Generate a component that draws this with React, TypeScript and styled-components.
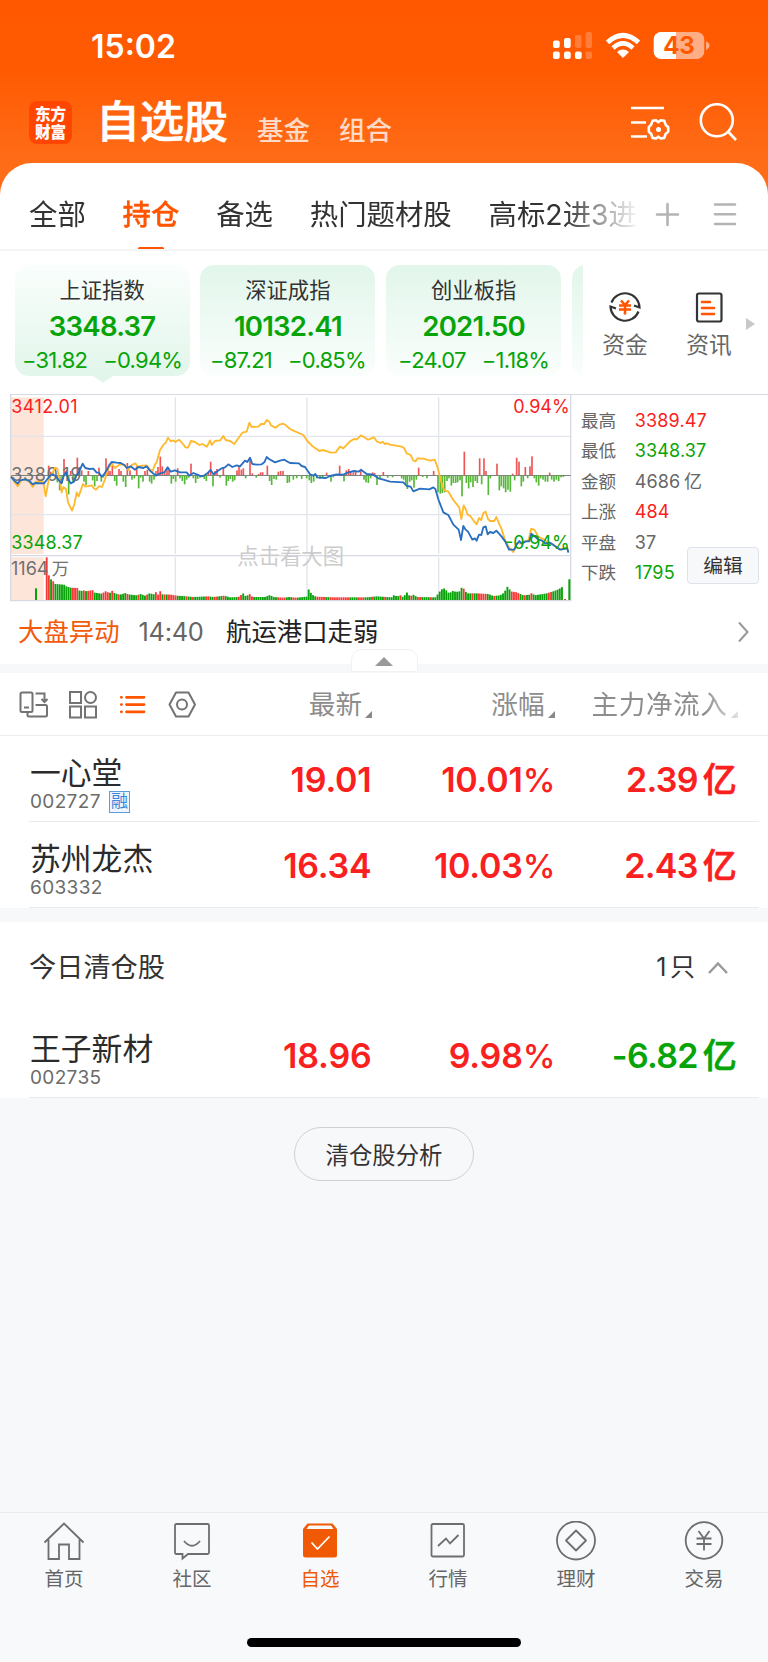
import React from "react";
import styled, { createGlobalStyle, css } from "styled-components";

const RED = "#fa2020";
const GREEN = "#07a407";
const ORANGE = "#ff5500";

const GlobalStyle = createGlobalStyle`
  * { box-sizing: border-box; }
  body {
    margin: 0;
    background: #f7f8fa;
    font-family: Inter, "Noto Sans CJK SC", sans-serif;
    color: #333;
  }
`;

const Screen = styled.div`
  width: 768px;
  height: 1662px;
  display: flex;
  flex-direction: column;
  overflow: hidden;
  background: #f7f8fa;
`;

/* ---------- header ---------- */
const Header = styled.header`
  height: 200px;
  margin-bottom: -37px;
  flex: none;
  background: linear-gradient(#ff5800 0, #ff5a02 70px, #ff6c18 160px, #ff6c18);
`;
const StatusBar = styled.div`
  height: 90px;
  display: flex;
  align-items: flex-start;
  padding: 32px 57px 0 91px;
`;
const Clock = styled.div`
  font-size: 32px;
  line-height: 30px;
  font-weight: 600;
  color: #fff;
  margin-right: auto;
`;
const StatusIcons = styled.svg`
  width: 160px;
  height: 28px;
  display: block;
`;
const TitleBar = styled.div`
  display: flex;
  height: 64px;
  align-items: flex-start;
  padding: 0 29px 0 29px;
`;
const Logo = styled.div`
  margin-top: 11px;
  width: 43px;
  height: 43px;
  border-radius: 8px;
  background: #ff4600;
  color: #fff;
  font: 900 15.6px/17.6px "Noto Sans CJK SC", sans-serif;
  text-align: center;
  padding-top: 4px;
`;
const Title = styled.h1`
  margin: 0 0 0 24px;
  font-size: 44px;
  line-height: 64px;
  font-weight: 500;
  -webkit-text-stroke: 0.6px #fff;
  color: #fff;
`;
const SubTitle = styled.span<{ $gap: number }>`
  margin: 8px 0 0 ${(p) => p.$gap}px;
  font-size: 26.5px;
  line-height: 64px;
  font-weight: 500;
  color: #ffdac6;
`;
const HeaderIcons = styled.svg`
  margin: 11px 0 0 auto;
  width: 110px;
  height: 42px;
`;

/* ---------- group tabs ---------- */
const Panel = styled.section`
  background: #fff;
  flex: none;
`;
const Tabs = styled.nav`
  height: 88px;
  border-radius: 32px 32px 0 0;
  background: #fff;
  border-bottom: 2px solid #f4f5f7;
  display: flex;
  padding-left: 29px;
  flex: none;
`;
const TabScroller = styled.div`
  display: flex;
  width: 609px;
  gap: 36.8px;
  overflow: hidden;
  white-space: nowrap;
  mask-image: linear-gradient(90deg, #000 535px, rgba(0, 0, 0, 0.45) 575px, rgba(0, 0, 0, 0) 612px);
`;
const Tab = styled.div<{ $active?: boolean }>`
  font-size: 28.4px;
  line-height: 103px;
  height: 88px;
  flex: none;
  display: flex;
  flex-direction: column;
  align-items: center;
  ${(p) =>
    p.$active &&
    css`
      color: ${ORANGE};
      font-weight: 500;
      -webkit-text-stroke: 0.3px ${ORANGE};
      &::after {
        content: "";
        width: 26px;
        height: 3px;
        border-radius: 2px;
        background: ${ORANGE};
        margin-top: -19px;
      }
    `}
`;
const TabTools = styled.svg`
  width: 110px;
  height: 40px;
  margin: 31px 0 0 8px;
`;

/* ---------- index cards ---------- */
const IndexRow = styled.div`
  height: 143px;
  display: flex;
  padding: 14px 0 0 14.5px;
`;
const CardScroller = styled.div`
  display: flex;
  gap: 10.6px;
  width: 568.5px;
  overflow: hidden;
`;
const Card = styled.div<{ $selected?: boolean }>`
  flex: none;
  width: 175.2px;
  height: 111px;
  border-radius: 14px;
  position: relative;
  text-align: center;
  background: ${(p) =>
    p.$selected ? "linear-gradient(#fafefc, #e2f6eb)" : "linear-gradient(#e2f6eb, #fafefc)"};
  ${(p) =>
    p.$selected &&
    css`
      &::after {
        content: "";
        position: absolute;
        left: 78px;
        bottom: -7px;
        border: solid transparent;
        border-width: 7px 10px 0;
        border-top-color: #e2f6eb;
      }
    `}
`;
const CardName = styled.div`
  font-size: 21.3px;
  line-height: 51px;
  height: 47px;
`;
const CardValue = styled.div`
  font-size: 27.6px;
  line-height: 28px;
  font-weight: 600;
  letter-spacing: -0.8px;
  color: ${GREEN};
`;
const CardDiff = styled.div`
  display: flex;
  justify-content: center;
  gap: 16px;
  font-size: 22px;
  line-height: 28px;
  margin-top: 6px;
  letter-spacing: -0.75px;
  color: ${GREEN};
`;
const Shortcut = styled.div<{ $left: number }>`
  margin-left: ${(p) => p.$left}px;
  width: 46px;
  display: flex;
  flex-direction: column;
  align-items: center;
  padding-top: 24px;
  font-size: 22.7px;
  line-height: 30px;
  white-space: nowrap;
  color: #666;
  svg {
    width: 36px;
    height: 36px;
    display: block;
    margin-bottom: 5px;
  }
`;
const MoreArrow = styled.div`
  margin: 53px 0 0 14px;
  width: 0;
  height: 0;
  border: solid transparent;
  border-width: 6px 0 6px 9px;
  border-left-color: #c8c8c8;
`;

/* ---------- chart ---------- */
const ChartRow = styled.div`
  display: flex;
  height: 210px;
  margin-left: 10px;
  border-top: 1.3px solid #d8dae3;
`;
const ChartSvg = styled.svg`
  width: 562px;
  height: 207px;
  flex: none;
  display: block;
`;
const Stats = styled.div`
  padding: 11px 0 0 9px;
  width: 115px;
  flex: none;
`;
const StatLine = styled.div`
  display: flex;
  height: 30.4px;
  line-height: 30.4px;
  font-size: 17.6px;
  color: #666;
  white-space: nowrap;
`;
const StatValue = styled.span<{ $tone?: string }>`
  margin-left: 18.5px;
  font-size: 18px;
  letter-spacing: 0.15px;
  color: ${(p) => p.$tone ?? "#666"};
`;
const Suffix = styled.span`
  margin-left: 3.5px;
`;
const EditButton = styled.button`
  margin: 152px 0 0 0;
  width: 72px;
  height: 36.5px;
  flex: none;
  border: 1.3px solid #dfe2ea;
  border-radius: 4px;
  background: #f7f8fa;
  color: #333;
  font: 19.8px/32px "Noto Sans CJK SC", sans-serif;
  padding: 0;
`;

/* ---------- news ---------- */
const NewsRow = styled.div`
  height: 60px;
  display: flex;
  padding: 0 19px 0 18px;
  font-size: 25.4px;
  line-height: 56px;
  color: #222;
`;
const NewsTag = styled.span`
  color: #f25a0c;
`;
const NewsTime = styled.span`
  margin: 0 22.5px 0 19px;
  color: #666;
  letter-spacing: -0.3px;
`;
const NewsArrow = styled.svg`
  width: 12px;
  height: 22px;
  margin: 17px 0 0 auto;
`;
const Band = styled.div<{ $h: number }>`
  height: ${(p) => p.$h}px;
  flex: none;
  background: #f7f8fa;
  display: flex;
  justify-content: center;
  align-items: flex-end;
`;
const Handle = styled.div`
  flex: none;
  width: 67px;
  height: 23px;
  margin-bottom: 1px;
  border: 1.3px solid #f1f2f5;
  border-radius: 11px 11px 0 0;
  background: #fff;
  display: flex;
  justify-content: center;
  padding-top: 7px;
  &::after {
    content: "";
    width: 0;
    height: 0;
    border: solid transparent;
    border-width: 0 9px 9px;
    border-bottom-color: #999;
  }
`;

/* ---------- stock table ---------- */
const TableHead = styled.div`
  height: 63px;
  display: flex;
  border-bottom: 1.3px solid #ecedf0;
  color: #8d8d8d;
  font-size: 26.6px;
  line-height: 63px;
`;
const ViewIcons = styled.svg`
  width: 190px;
  height: 40px;
  margin: 12px 0 0 14px;
  flex: none;
`;
const Column = styled.div<{ $w: number; $faded?: boolean }>`
  width: ${(p) => p.$w}px;
  display: flex;
  justify-content: flex-end;
  align-items: flex-start;
  white-space: nowrap;
  ${(p) =>
    p.$faded &&
    css`
      letter-spacing: 0.6px;
      mask-image: linear-gradient(90deg, #000 150px, rgba(0, 0, 0, 0.2) 185px);
    `}
  &::after {
    content: "";
    margin: 38px 0 0 3px;
    width: 0;
    height: 0;
    border-left: 7px solid transparent;
    border-bottom: 7px solid #888;
  }
`;
const StockRow = styled.div`
  height: 86px;
  margin: 0 9px 0 29px;
  border-bottom: 1.3px solid #e9ebef;
  display: flex;
  flex: none;
`;
const StockInfo = styled.div`
  width: 160px;
  padding: 15px 0 0 1px;
`;
const StockName = styled.div`
  font-size: 30.8px;
  line-height: 44px;
  height: 39px;
  color: #2b2b2b;
`;
const StockCode = styled.div`
  display: flex;
  align-items: center;
  font-size: 19px;
  line-height: 24px;
  letter-spacing: 0.35px;
  color: #6b6b6b;
`;
const MarginTag = styled.span`
  margin-left: 8px;
  width: 21.5px;
  height: 21.5px;
  border: 1.3px solid #5b9be0;
  color: #3a86d8;
  font-size: 17px;
  line-height: 18px;
  text-align: center;
  letter-spacing: 0;
  background: #eef5fd;
`;
const Figure = styled.div<{ $w: number; $tone: string }>`
  width: ${(p) => p.$w}px;
  color: ${(p) => p.$tone};
  font-size: 34px;
  line-height: 87px;
  font-weight: 600;
  letter-spacing: -0.2px;
  text-align: right;
  white-space: nowrap;
`;
const Percent = styled.span`
  font-size: 33px;
  font-weight: 500;
  letter-spacing: -1px;
`;
const FlowNumber = styled.span`
  letter-spacing: -0.7px;
`;
const Unit = styled.span`
  font-size: 34px;
  font-weight: 500;
  margin-left: 5px;
  -webkit-text-stroke: 0.7px currentColor;
`;
const SectionHead = styled.div`
  height: 90px;
  display: flex;
  padding: 0 40px 0 29px;
  font-size: 27.2px;
  line-height: 91px;
`;
const SectionCount = styled.span`
  margin: 0 13px 0 auto;
  font-size: 25px;
`;
const SectionArrow = styled.svg`
  width: 20px;
  height: 14px;
  margin-top: 39px;
`;
const AnalyseButton = styled.button`
  align-self: center;
  flex: none;
  margin-top: 28.5px;
  width: 179.5px;
  height: 54px;
  border: 1.3px solid #d0d1d4;
  border-radius: 27px;
  background: #f7f8fa;
  font: 23.4px/48px "Noto Sans CJK SC", sans-serif;
  color: #333;
  padding: 0;
`;

/* ---------- bottom bar ---------- */
const BottomBar = styled.footer`
  margin-top: auto;
  height: 150px;
  flex: none;
  border-top: 1.5px solid #e9ebee;
  background: #f8f9fb;
  display: flex;
  flex-direction: column;
  align-items: center;
`;
const BottomNav = styled.nav`
  display: flex;
  height: 125px;
`;
const NavItem = styled.div<{ $active?: boolean }>`
  width: 128px;
  display: flex;
  flex-direction: column;
  align-items: center;
  padding-top: 8px;
  font-size: 19.5px;
  line-height: 28px;
  color: ${(p) => (p.$active ? "#f05a05" : "#666")};
  svg {
    width: 44px;
    height: 42px;
    display: block;
    margin-bottom: 1.5px;
  }
`;
const HomeIndicator = styled.div`
  width: 274px;
  height: 9px;
  border-radius: 5px;
  background: #000;
`;

/* ---------- chart data (chart units: a third of a pixel) ---------- */
type P = [number, number];

const average: P[] = [
  [33,272],[43,290],[53,304],[65,285],[80,284],[92,296],[98,306],[108,290],[130,291],[137,334],[146,285],[158,262],[165,248],[172,251],[180,290],[185,322],[190,306],[198,312],[204,352],[216,377],[223,358],[230,322],[236,334],[249,297],[256,305],[275,301],[281,309],[288,314],[298,303],[306,306],[315,283],[325,250],[335,236],[345,249],[360,238],[375,240],[385,254],[395,240],[406,235],[413,245],[425,242],[440,241],[450,254],[458,258],[465,238],[470,232],[480,195],[492,177],[497,174],[504,158],[512,169],[520,166],[526,171],[537,164],[550,178],[556,187],[564,188],[573,168],[585,171],[598,180],[607,177],[621,185],[630,166],[635,180],[645,168],[661,166],[670,153],[677,165],[690,168],[703,177],[715,160],[727,143],[740,140],[748,113],[755,126],[775,125],[783,117],[793,117],[800,105],[808,110],[813,121],[826,128],[840,118],[850,116],[858,121],[870,132],[880,137],[910,150],[922,168],[938,184],[958,198],[968,195],[982,199],[992,203],[1007,202],[1020,185],[1030,190],[1050,169],[1062,162],[1071,163],[1082,151],[1092,156],[1104,164],[1122,157],[1130,169],[1142,174],[1148,170],[1154,177],[1162,175],[1170,179],[1205,185],[1212,189],[1220,205],[1232,210],[1240,227],[1247,229],[1253,220],[1270,221],[1290,227],[1304,224],[1312,245],[1325,295],[1332,315],[1345,320],[1360,345],[1378,368],[1384,402],[1391,361],[1398,375],[1402,388],[1411,393],[1423,410],[1430,418],[1437,399],[1444,405],[1450,384],[1457,380],[1464,402],[1470,408],[1483,408],[1489,396],[1498,418],[1504,430],[1515,465],[1525,485],[1540,501],[1550,475],[1560,475],[1586,465],[1593,432],[1603,434],[1615,455],[1635,465],[1645,478],[1655,475],[1670,488],[1685,494],[1700,485],[1705,500],
];
const price: P[] = [
  [33,275],[42,286],[53,296],[60,286],[75,283],[88,288],[98,298],[105,294],[132,295],[140,285],[148,275],[155,268],[165,272],[175,284],[185,295],[192,270],[198,262],[204,280],[212,295],[222,290],[230,270],[238,258],[248,236],[256,249],[268,252],[280,251],[290,263],[297,263],[305,275],[312,268],[320,256],[328,240],[335,231],[350,233],[362,234],[373,240],[380,249],[392,244],[405,254],[415,246],[430,249],[440,244],[450,257],[458,264],[468,272],[480,265],[493,262],[503,247],[512,260],[525,256],[540,262],[560,262],[568,272],[580,264],[590,268],[605,274],[613,271],[622,265],[632,255],[640,268],[650,260],[665,250],[675,247],[685,238],[697,246],[710,241],[720,244],[735,227],[742,231],[750,218],[757,237],[770,239],[785,238],[793,232],[800,216],[807,222],[825,232],[840,227],[853,224],[863,230],[870,234],[897,235],[905,243],[915,246],[930,268],[940,272],[946,267],[952,277],[978,279],[990,273],[1010,268],[1030,269],[1045,262],[1062,258],[1075,260],[1083,254],[1100,267],[1120,269],[1135,280],[1150,284],[1170,290],[1210,292],[1220,303],[1232,305],[1240,319],[1260,311],[1288,313],[1300,307],[1306,312],[1315,343],[1330,382],[1345,390],[1360,419],[1376,434],[1383,465],[1390,423],[1396,433],[1404,440],[1417,464],[1425,460],[1430,467],[1437,449],[1444,450],[1450,427],[1457,424],[1463,448],[1470,441],[1480,444],[1489,437],[1505,455],[1516,470],[1527,494],[1543,494],[1550,478],[1558,468],[1565,476],[1577,469],[1588,469],[1594,446],[1605,455],[1615,464],[1625,466],[1635,475],[1650,473],[1665,483],[1680,494],[1702,490],[1705,503],
];
const momentum: P[] = [
  [146,28],[152,10],[159,8],[172,-20],[179,-44],[186,-22],[192,48],[199,14],[206,-56],[212,12],[219,-20],[225,-10],[232,52],[238,24],[245,14],[252,-18],[258,-28],[265,12],[278,-14],[284,-32],[291,-16],[297,22],[304,-18],[310,-6],[318,50],[324,18],[330,12],[337,28],[344,-16],[350,-30],[357,18],[363,12],[370,-18],[377,-34],[382,36],[390,14],[396,-12],[403,-8],[410,26],[416,-38],[422,-6],[429,-18],[435,12],[442,16],[449,-18],[455,-24],[462,-12],[468,12],[474,24],[481,55],[487,26],[494,12],[501,20],[507,16],[514,-24],[520,-10],[527,-18],[533,20],[540,-8],[547,-16],[554,-26],[560,-12],[566,-6],[573,34],[580,-8],[587,-22],[593,-10],[600,-6],[613,-10],[619,-16],[625,8],[632,40],[639,-32],[645,12],[651,18],[660,-6],[670,24],[679,-30],[685,-16],[691,-10],[698,-18],[704,-14],[711,14],[717,26],[724,16],[730,20],[737,-8],[750,52],[757,5],[769,-6],[776,3],[782,8],[788,8],[802,28],[809,-16],[815,-28],[822,-10],[829,-12],[835,10],[842,12],[849,12],[862,-22],[868,-20],[880,-12],[890,-8],[905,-10],[920,-8],[928,-14],[934,-22],[941,-18],[950,-8],[960,-10],[968,-8],[980,7],[993,-18],[1000,-5],[1019,28],[1026,3],[1032,-17],[1039,14],[1046,18],[1052,10],[1060,8],[1067,10],[1082,14],[1092,-12],[1098,-20],[1105,-22],[1112,-8],[1118,8],[1124,6],[1131,-28],[1140,-8],[1150,9],[1163,-6],[1178,-5],[1205,-8],[1211,-12],[1217,-26],[1222,-40],[1229,-18],[1235,-14],[1242,-36],[1249,-12],[1256,22],[1268,-4],[1281,-8],[1301,12],[1314,-50],[1321,-54],[1327,-52],[1334,-50],[1341,-16],[1347,-8],[1354,-30],[1360,-22],[1367,-22],[1373,-20],[1380,-14],[1386,-62],[1393,70],[1399,-22],[1406,-38],[1412,-20],[1419,-34],[1426,-16],[1432,-22],[1439,50],[1445,-26],[1452,50],[1458,12],[1465,-58],[1471,-8],[1491,34],[1498,-44],[1504,-32],[1511,-38],[1517,-50],[1524,-42],[1531,-48],[1538,4],[1544,-14],[1550,52],[1557,40],[1564,-32],[1570,-18],[1576,24],[1583,-8],[1590,26],[1596,56],[1603,-8],[1609,-20],[1616,-30],[1622,-8],[1629,-12],[1636,-18],[1643,-18],[1649,7],[1655,-12],[1662,-18],[1669,-12],[1676,-16],[1683,-5],[1690,-4],
];
const volumeShape: P[] = [
  [140,128],[146,75],[153,62],[159,57],[166,48],[192,46],[199,41],[212,37],[232,36],[240,26],[250,29],[260,26],[277,30],[284,22],[305,19],[318,27],[328,20],[337,28],[344,20],[360,16],[377,21],[384,17],[410,14],[422,18],[435,13],[448,20],[462,17],[468,24],[474,16],[481,27],[487,17],[515,16],[530,13],[560,11],[580,9],[625,11],[640,9],[672,13],[690,8],[715,9],[730,20],[737,11],[750,18],[757,9],[795,9],[810,15],[820,9],[850,7],[868,9],[890,7],[920,10],[927,35],[934,18],[940,14],[948,10],[1000,8],[1100,8],[1130,11],[1160,9],[1178,8],[1183,17],[1190,10],[1203,15],[1209,8],[1222,24],[1229,11],[1242,16],[1250,9],[1307,8],[1316,22],[1325,32],[1333,35],[1347,20],[1360,28],[1367,24],[1378,26],[1386,39],[1393,32],[1400,20],[1430,20],[1465,18],[1480,12],[1500,14],[1512,22],[1524,43],[1531,26],[1550,23],[1570,14],[1590,16],[1596,22],[1603,14],[1640,20],[1660,26],[1675,32],[1688,40],
];
const redRanges: P[] = [
  [139,148],[158,161],[216,236],[248,256],[264,278],[308,328],[334,342],[356,360],[382,386],[412,420],[438,444],[462,476],[480,484],[488,500],[506,530],[556,560],[576,582],[616,626],[644,652],[668,674],[714,724],[746,756],[784,788],[830,860],[880,890],[952,972],[990,1050],[1072,1090],[1112,1120],[1150,1158],[1196,1206],[1230,1236],[1250,1262],[1288,1296],[1388,1396],[1412,1418],[1432,1460],[1480,1486],[1534,1542],[1548,1560],[1572,1580],[1592,1600],[1644,1658],
];

const heightAt = (x: number) => {
  for (let i = 1; i < volumeShape.length; i++) {
    const [x1, h1] = volumeShape[i];
    if (x <= x1) {
      const [x0, h0] = volumeShape[i - 1];
      return h0 + ((h1 - h0) * (x - x0)) / (x1 - x0);
    }
  }
  return 40;
};
const volumes = Array.from({ length: 237 }, (_, i) => {
  const x = 140 + i * 6.55;
  return { x, h: heightAt(x), red: redRanges.some(([a, b]) => x >= a && x <= b) };
}).filter((v) => v.x < 1692);

const toPath = (points: P[]) => points.map((p) => p.join(",")).join(" ");

const IntradayChart = () => (
  <ChartSvg viewBox="30 30 1686 621">
    <rect x="33" y="37" width="98" height="470" fill="#fde5d9" />
    <rect x="33" y="517" width="98" height="129" fill="#fde5d9" />
    <g stroke="#e3e5ec" strokeWidth="4" fill="none">
      <path d="M33 154H1712M33 389H1712M526 37V507M526 517V645M921 37V507M921 517V645M1316 37V507M1316 517V645" />
      <path d="M32 30V648M32 512H1712M1712 30V648M30 647H1714" stroke="#d8dae3" />
    </g>
    <text x="712" y="536" fontSize="64" fill="#ccc" textLength="320">点击看大图</text>
    <path d="M33 271.500H1712" stroke="#808080" strokeWidth="3.500" />
    {momentum.map(([x, h]) => (
      <rect key={x} x={x - 2.5} y={h > 0 ? 270 - h : 272} width="5" height={Math.abs(h)} fill={h > 0 ? "#ee5555" : "#55b838"} />
    ))}
    {volumes.map((v) => (
      <rect key={v.x} x={v.x - 2.7} y={645 - v.h} width="5.600" height={v.h} fill={v.red ? "#fa3838" : "#0aa20a"} />
    ))}
    <rect x="105" y="610" width="6" height="35" fill="#0aa20a" />
    <rect x="1705" y="583" width="6" height="62" fill="#0aa20a" />
    <rect x="1692" y="642" width="6" height="3" fill="#fa3838" />
    <g fontSize="54">
      <text x="34" y="84" fill={RED} textLength="199">3412.01</text>
      <text x="1709" y="84" fill={RED} textAnchor="end">0.94%</text>
      <text x="34" y="288" fill="#707070" textLength="210">3380.19</text>
      <text x="34" y="492" fill={GREEN} textLength="214">3348.37</text>
      <text x="33" y="570" fill="#707070">1164<tspan dx="10" fontSize="52">万</tspan></text>
    </g>
    <polyline points={toPath(average)} fill="none" stroke="#ffb92e" strokeWidth="5.500" strokeLinejoin="round" />
    <polyline points={toPath(price)} fill="none" stroke="#286fc2" strokeWidth="5.500" strokeLinejoin="round" />
    <text x="1709" y="492" fontSize="54" fill={GREEN} textAnchor="end">-0.94%</text>
  </ChartSvg>
);

const indices = [
  { name: "上证指数", value: "3348.37", diff: "−31.82", pct: "−0.94%" },
  { name: "深证成指", value: "10132.41", diff: "−87.21", pct: "−0.85%" },
  { name: "创业板指", value: "2021.50", diff: "−24.07", pct: "−1.18%" },
];

const stats = [
  { label: "最高", value: "3389.47", tone: RED },
  { label: "最低", value: "3348.37", tone: GREEN },
  { label: "金额", value: "4686", suffix: "亿" },
  { label: "上涨", value: "484", tone: RED },
  { label: "平盘", value: "37" },
  { label: "下跌", value: "1795", tone: GREEN },
];

type StockData = { name: string; code: string; tag?: string; last: string; change: string; flow: string; out?: boolean };

const holdings: StockData[] = [
  { name: "一心堂", code: "002727", tag: "融", last: "19.01", change: "10.01", flow: "2.39" },
  { name: "苏州龙杰", code: "603332", last: "16.34", change: "10.03", flow: "2.43" },
];

const Stock = ({ s }: { s: StockData }) => (
  <StockRow>
    <StockInfo>
      <StockName>{s.name}</StockName>
      <StockCode>
        {s.code}
        {s.tag && <MarginTag>{s.tag}</MarginTag>}
      </StockCode>
    </StockInfo>
    <Figure $w={182.5} $tone={RED}>{s.last}</Figure>
    <Figure $w={183} $tone={RED}>
      {s.change}
      <Percent>%</Percent>
    </Figure>
    <Figure $w={182} $tone={s.out ? GREEN : RED}>
      <FlowNumber>{s.flow}</FlowNumber>
      <Unit>亿</Unit>
    </Figure>
  </StockRow>
);

const navItems = [
  {
    label: "首页",
    icon: <path d="M2.500 21.500 22 2.500 41.500 21.500M6.500 18.500V38H17V23.500H27V38H37.500V18.500" />,
  },
  {
    label: "社区",
    icon: <path d="M6.500 3H37.500Q39 3 39 4.500V31.500Q39 33 37.500 33H18L12.500 37.500V33H6.500Q5 33 5 31.500V4.500Q5 3 6.500 3ZM14 20Q22 29.500 30 20" />,
  },
  {
    label: "自选",
    active: true,
    icon: (
      <>
        <path d="M9.500 2.500H34.500L39 8V34Q39 36.500 36.500 36.500H7.500Q5 36.500 5 34V8Z" fill="#f05a05" stroke="none" />
        <path d="M11 4.500H33L35.500 8H8.500Z" fill="#f8f9fb" stroke="none" />
        <path d="M13.500 21.500 19.500 28 31.500 15.500" stroke="#fff" />
      </>
    ),
  },
  {
    label: "行情",
    icon: <path d="M7 3H36.500Q38 3 38 4.500V34Q38 35.500 36.500 35.500H7Q5.500 35.500 5.500 34V4.500Q5.500 3 7 3ZM12 25 20 17.500 24 22.500 32.500 14" />,
  },
  {
    label: "理财",
    icon: (
      <>
        <circle cx="22" cy="19.500" r="19" />
        <path d="M22 9.500 32 19.500 22 29.500 12 19.500Z" strokeLinejoin="round" />
      </>
    ),
  },
  {
    label: "交易",
    icon: (
      <>
        <circle cx="22" cy="19.500" r="18.300" />
        <path d="M16.500 10 22 17.500 27.500 10M22 17.500V29.500M14.500 17.500H29.500M14.500 23H29.500" />
      </>
    ),
  },
];

export default function App() {
  return (
    <Screen>
      <GlobalStyle />
      <Header>
        <StatusBar>
          <Clock>15:02</Clock>
          <StatusIcons viewBox="551 32 160 28">
            <g fill="#fff">
              <rect x="553" y="40.500" width="6.700" height="7.500" rx="2" />
              <rect x="564" y="38" width="6.700" height="10" rx="2" />
              <rect x="553" y="51.500" width="6.700" height="7.500" rx="2" />
              <rect x="564" y="51.500" width="6.700" height="7.500" rx="2" />
              <rect x="575" y="51.500" width="6.700" height="7.500" rx="2" />
              <g opacity="0.220">
                <rect x="575" y="35" width="6.500" height="13" rx="2" />
                <rect x="585.500" y="32" width="6.500" height="16" rx="2" />
                <rect x="585.500" y="51.500" width="6.500" height="7.500" rx="2" />
              </g>
            </g>
            <g fill="none" stroke="#fff" strokeWidth="5">
              <path d="M607.500 42.300Q623 28.300 638.500 42.300" />
              <path d="M613 48Q623 38.800 633 48" strokeWidth="4.600" />
            </g>
            <path d="M617 52Q623 47.200 629 52L623 58Z" fill="#fff" />
            <clipPath id="battery"><rect x="653.500" y="32" width="51" height="27" rx="8" /></clipPath>
            <g clipPath="url(#battery)">
              <rect x="653.500" y="32" width="51" height="27" fill="#ffad85" />
              <rect x="653.500" y="32" width="22.500" height="27" fill="#fff" />
            </g>
            <path d="M706 41.500Q709.500 43 709.500 45.500T706 50Z" fill="#ffad85" />
            <text x="679" y="54.200" textAnchor="middle" fontSize="24" fontWeight="700" fill="#ff5900">43</text>
          </StatusIcons>
        </StatusBar>
        <TitleBar>
          <Logo>东方<br />财富</Logo>
          <Title>自选股</Title>
          <SubTitle $gap={29}>基金</SubTitle>
          <SubTitle $gap={29}>组合</SubTitle>
          <HeaderIcons viewBox="629 101 110 42" fill="none" stroke="#fff" strokeWidth="2.600">
            <path d="M631 108H664M631 122.500H646M631 136.500H647" />
            <path
              d="M652.500 120.800 656 120.300 658.300 122.200 660.700 120.300 664.300 120.800 665.600 124.700 668.200 127.200V131.600L665.600 134 664.300 137.900 660.700 138.500 658.300 136.700 656 138.500 652.500 137.900 651.200 134 648.800 131.600V127.200L651.200 124.700Z"
              strokeLinejoin="round"
            />
            <circle cx="658.500" cy="129.400" r="2.500" fill="#fff" stroke="none" />
            <circle cx="716.800" cy="120.300" r="16" />
            <path d="M728 131.500 736 140" />
          </HeaderIcons>
        </TitleBar>
      </Header>

      <Tabs>
        <TabScroller>
          <Tab>全部</Tab>
          <Tab $active>持仓</Tab>
          <Tab>备选</Tab>
          <Tab>热门题材股</Tab>
          <Tab>高标2进3进4</Tab>
        </TabScroller>
        <TabTools viewBox="646 194 110 40" fill="none" stroke="#b4b4b4" strokeWidth="2.600" strokeLinecap="round">
          <path d="M657 214.500H678M667.500 204V225M715 204.500H735M715 214.300H735M715 224H735" />
        </TabTools>
      </Tabs>

      <Panel>
        <IndexRow>
          <CardScroller>
            {indices.map((it, i) => (
              <Card key={it.name} $selected={i === 0}>
                <CardName>{it.name}</CardName>
                <CardValue>{it.value}</CardValue>
                <CardDiff>
                  <span>{it.diff}</span>
                  <span>{it.pct}</span>
                </CardDiff>
              </Card>
            ))}
            <Card />
          </CardScroller>
          <Shortcut $left={19}>
            <svg viewBox="0 0 36 36" fill="none" stroke="#333" strokeWidth="2.200">
              <path d="M4.500 13.500A14.500 14.500 0 0 1 32.500 18.500L27 16.500M31.500 22.500A14.500 14.500 0 0 1 3.500 17.500L9 19.500" />
              <path d="M14 11.500 18 16 22 11.500M18 16V25.500M12 16.500H24M12 20.500H24" stroke={ORANGE} strokeWidth="2.500" />
            </svg>
            资金
          </Shortcut>
          <Shortcut $left={38}>
            <svg viewBox="0 0 36 36" fill="none" stroke="#333" strokeWidth="2.200">
              <rect x="6" y="4.500" width="24.500" height="28" rx="2" />
              <path d="M11 13H19M11 19H23M11 25H23" stroke={ORANGE} strokeWidth="2.500" strokeLinecap="round" />
            </svg>
            资讯
          </Shortcut>
          <MoreArrow />
        </IndexRow>

        <ChartRow>
          <IntradayChart />
          <Stats>
            {stats.map((s) => (
              <StatLine key={s.label}>
                {s.label}
                <StatValue $tone={s.tone}>
                  {s.value}
                  {s.suffix && <Suffix>{s.suffix}</Suffix>}
                </StatValue>
              </StatLine>
            ))}
          </Stats>
          <EditButton>编辑</EditButton>
        </ChartRow>

        <NewsRow>
          <NewsTag>大盘异动</NewsTag>
          <NewsTime>14:40</NewsTime>
          航运港口走弱
          <NewsArrow viewBox="0 0 12 22" fill="none" stroke="#999" strokeWidth="2">
            <path d="M2 1.500 10.500 11 2 20.500" />
          </NewsArrow>
        </NewsRow>
        <Band $h={9}>
          <Handle />
        </Band>

        <TableHead>
          <ViewIcons viewBox="14 685 190 40" fill="none" stroke="#737373" strokeWidth="2">
            <rect x="20.500" y="692.500" width="12" height="19.500" rx="1.500" />
            <path d="M24 707.500H29M35.500 693.500H44.500V701.500M41.500 699 44.500 702 47.500 699M35.500 705H45.500Q47 705 47 706.500V715Q47 716.500 45.500 716.500H29Q27.500 716.500 27.500 715V713" />
            <rect x="70" y="692" width="11" height="11" />
            <circle cx="90.500" cy="697.500" r="5.500" />
            <rect x="70" y="706.500" width="11" height="11" />
            <rect x="85" y="706.500" width="11" height="11" />
            <path d="M126.500 697.300H144M126.500 704.600H144M126.500 711.800H144M121.300 697.300H121.500M121.300 704.600H121.500M121.300 711.800H121.500" stroke={ORANGE} strokeWidth="2.800" strokeLinecap="round" />
            <path d="M176 692.500H188.500L195 704.500 188.500 716.500H176L169.500 704.500Z" strokeLinejoin="round" />
            <circle cx="182" cy="704.500" r="5" />
          </ViewIcons>
          <Column $w={168}>最新</Column>
          <Column $w={182.5}>涨幅</Column>
          <Column $w={183} $faded>主力净流入</Column>
        </TableHead>
        {holdings.map((s) => (
          <Stock key={s.code} s={s} />
        ))}
      </Panel>

      <Band $h={14} />
      <Panel>
        <SectionHead>
          今日清仓股
          <SectionCount>
            1<Suffix>只</Suffix>
          </SectionCount>
          <SectionArrow viewBox="0 0 20 14" fill="none" stroke="#999" strokeWidth="2.400">
            <path d="M1 12 10 2.500 19 12" />
          </SectionArrow>
        </SectionHead>
        <Stock s={{ name: "王子新材", code: "002735", last: "18.96", change: "9.98", flow: "-6.82", out: true }} />
      </Panel>
      <AnalyseButton>清仓股分析</AnalyseButton>

      <BottomBar>
        <BottomNav>
          {navItems.map((n) => (
            <NavItem key={n.label} $active={n.active}>
              <svg viewBox="0 0 44 42" fill="none" stroke="#6e6e6e" strokeWidth="1.800">
                {n.icon}
              </svg>
              {n.label}
            </NavItem>
          ))}
        </BottomNav>
        <HomeIndicator />
      </BottomBar>
    </Screen>
  );
}
